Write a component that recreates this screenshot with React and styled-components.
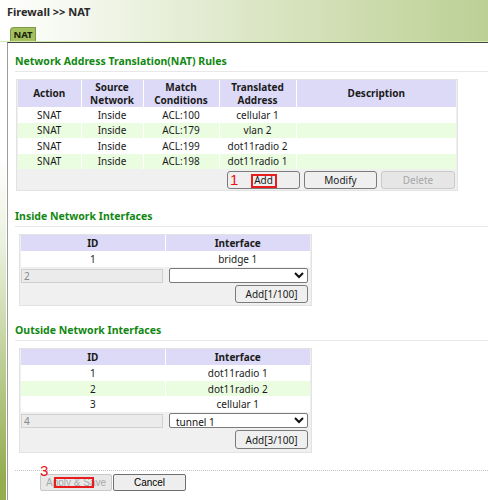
import React from 'react'
import styled, { createGlobalStyle } from 'styled-components'

const rules = [
  { action: 'SNAT', source: 'Inside', match: 'ACL:100', translated: 'cellular 1' },
  { action: 'SNAT', source: 'Inside', match: 'ACL:179', translated: 'vlan 2' },
  { action: 'SNAT', source: 'Inside', match: 'ACL:199', translated: 'dot11radio 2' },
  { action: 'SNAT', source: 'Inside', match: 'ACL:198', translated: 'dot11radio 1' },
]

const insideIfaces = [{ id: 1, name: 'bridge 1' }]
const outsideIfaces = [
  { id: 1, name: 'dot11radio 1' },
  { id: 2, name: 'dot11radio 2' },
  { id: 3, name: 'cellular 1' },
]

function App() {
  return (
    <>
      <GlobalStyle />
      <StPage>
        <StHeader>
          <StCrumb>Firewall &gt;&gt; NAT</StCrumb>
          <StTab>NAT</StTab>
        </StHeader>
        <StBody>
          <StStrip />
          <StFrame>
            <StSectionTitle>Network Address Translation(NAT) Rules</StSectionTitle>
            <StBox $width="442px" $ml="1px">
              <StTable>
                <colgroup>
                  <col style={{ width: 63 }} />
                  <col style={{ width: 62 }} />
                  <col style={{ width: 76 }} />
                  <col style={{ width: 77 }} />
                  <col />
                </colgroup>
                <thead>
                  <tr>
                    <StTh $h="27px">Action</StTh>
                    <StTh>Source<br />Network</StTh>
                    <StTh>Match<br />Conditions</StTh>
                    <StTh>Translated<br />Address</StTh>
                    <StTh>Description</StTh>
                  </tr>
                </thead>
                <tbody>
                  {rules.map((r, i) => (
                    <StTr key={i} $alt={i % 2 === 1}>
                      <StTd>{r.action}</StTd>
                      <StTd>{r.source}</StTd>
                      <StTd>{r.match}</StTd>
                      <StTd>{r.translated}</StTd>
                      <StTd></StTd>
                    </StTr>
                  ))}
                </tbody>
              </StTable>
              <StButtonRow $pt="2px" $pr="1px" $gap="4px">
                <StMarked>
                  <StButton $w="73px">Add</StButton>
                  <StStepNo $left="3px" $top="1px">1</StStepNo>
                  <StHighlight $left="24px" $top="3px" $w="26px" $h="14px" />
                </StMarked>
                <StButton $w="73px">Modify</StButton>
                <StButton $w="74px" disabled>Delete</StButton>
              </StButtonRow>
            </StBox>

            <StSectionTitle $mt="17px">Inside Network Interfaces</StSectionTitle>
            <StBox $width="293px" $ml="4px">
              <StTable>
                <colgroup>
                  <col style={{ width: 144 }} />
                  <col />
                </colgroup>
                <thead>
                  <tr>
                    <StTh $h="16px">ID</StTh>
                    <StTh>Interface</StTh>
                  </tr>
                </thead>
                <tbody>
                  {insideIfaces.map((r, i) => (
                    <StTr key={r.id} $alt={i % 2 === 1} $h="16px">
                      <StTd>{r.id}</StTd>
                      <StTd>{r.name}</StTd>
                    </StTr>
                  ))}
                  <StInputRow>
                    <StTd><StTextInput value="2" disabled readOnly /></StTd>
                    <StTd>
                      <StSelect defaultValue="">
                        <option value=""></option>
                        <option value="bridge 1">bridge 1</option>
                      </StSelect>
                    </StTd>
                  </StInputRow>
                </tbody>
              </StTable>
              <StButtonRow $pt="1px" $pr="2px" $pb="2px">
                <StButton $w="73px">Add[1/100]</StButton>
              </StButtonRow>
            </StBox>

            <StSectionTitle $mt="16px">Outside Network Interfaces</StSectionTitle>
            <StBox $width="293px" $ml="4px">
              <StTable>
                <colgroup>
                  <col style={{ width: 144 }} />
                  <col />
                </colgroup>
                <thead>
                  <tr>
                    <StTh $h="16px">ID</StTh>
                    <StTh>Interface</StTh>
                  </tr>
                </thead>
                <tbody>
                  {outsideIfaces.map((r, i) => (
                    <StTr key={r.id} $alt={i % 2 === 1} $h="15.7px">
                      <StTd>{r.id}</StTd>
                      <StTd>{r.name}</StTd>
                    </StTr>
                  ))}
                  <StInputRow>
                    <StTd><StTextInput value="4" disabled readOnly /></StTd>
                    <StTd>
                      <StSelect defaultValue="tunnel 1">
                        <option value="tunnel 1">tunnel 1</option>
                      </StSelect>
                    </StTd>
                  </StInputRow>
                </tbody>
              </StTable>
              <StButtonRow $pt="1px" $pr="2px" $pb="3px">
                <StButton $w="73px" $h="19px">Add[3/100]</StButton>
              </StButtonRow>
            </StBox>

            <StFooter>
              <StMarked>
                <StFormButton $w="72px" disabled>Apply &amp; Save</StFormButton>
                <StStepNo $left="0px" $top="-11px">3</StStepNo>
                <StHighlight $left="14px" $top="3px" $w="40px" $h="11px" />
              </StMarked>
              <StFormButton $w="73px">Cancel</StFormButton>
            </StFooter>
          </StFrame>
        </StBody>
      </StPage>
    </>
  )
}

export default App

const GlobalStyle = createGlobalStyle`
  html, body {
    margin: 0;
    padding: 0;
    background: #fff;
  }
  body {
    font-family: "Noto Sans", "Open Sans", sans-serif;
    color: #1a1a1a;
  }
`

const StPage = styled.div`
  width: 488px;
  height: 500px;
  overflow: hidden;
  display: flex;
  flex-direction: column;
`

const StHeader = styled.div`
  height: 41px;
  border-bottom: 1px solid #d4ecaa;
  background: linear-gradient(to right, #ffffff 0%, #dde7c8 50%, #bcd094 100%);
  display: flex;
  flex-direction: column;
  justify-content: space-between;
`

const StCrumb = styled.div`
  padding: 5px 0 0 7px;
  font-size: 11px;
  line-height: 14px;
  font-weight: 700;
  color: #2a2a2a;
`

const StTab = styled.div`
  margin-left: 10px;
  width: 26px;
  height: 14px;
  box-sizing: border-box;
  border: 1px solid #7c9a48;
  border-bottom: none;
  border-radius: 4px 1px 0 0;
  background: #a3bf5e;
  font-size: 9.5px;
  line-height: 13px;
  font-weight: 700;
  text-align: center;
  color: #16210a;
`

const StBody = styled.div`
  flex: 1;
  display: flex;
`

const StStrip = styled.div`
  width: 6px;
  margin-right: 1px;
  background: linear-gradient(to bottom, #ffffff 25%, #e9f0dc 45%, #93ad4f 95%);
`

const StFrame = styled.div`
  flex: 1;
  border-left: 1px solid #9c9c9c;
  border-top: 1px solid #444;
  padding: 0 0 0 7px;
`

const StSectionTitle = styled.div`
  margin-top: ${(p) => p.$mt || '10px'};
  padding-bottom: 2px;
  border-bottom: 1px solid #e8e8e8;
  font-size: 10.5px;
  line-height: 16px;
  font-weight: 700;
  color: #128812;
`

const StBox = styled.div`
  width: ${(p) => p.$width};
  margin: 7px 0 0 ${(p) => p.$ml};
  box-sizing: border-box;
  border: 1px solid #e2e2e2;
  background: #f0f0f0;
  padding: 0 1px 0 1px;
`

const StTable = styled.table`
  width: 100%;
  table-layout: fixed;
  border-collapse: collapse;
  font-size: 10px;
`

const StTh = styled.th`
  height: ${(p) => p.$h || 'auto'};
  padding: 0;
  background: #dcdaf6;
  border-right: 1px solid #fff;
  font-weight: 700;
  line-height: 13px;
  text-align: center;
  &:last-child {
    border-right: none;
  }
`

const StTr = styled.tr`
  height: ${(p) => p.$h || '15.5px'};
  background: ${(p) => (p.$alt ? '#eafde1' : '#fff')};
`

const StTd = styled.td`
  padding: 0;
  line-height: 12px;
  text-align: center;
  border-right: 1px solid #fff;
  &:last-child {
    border-right: none;
  }
`

const StInputRow = styled.tr`
  height: 17px;
  background: #f0f0f0;
  td {
    border-right: none;
    vertical-align: middle;
  }
`

const StTextInput = styled.input`
  display: block;
  width: 142px;
  height: 14px;
  margin: 0;
  box-sizing: border-box;
  border: 1px solid #d0d0d0;
  background: #ebebeb;
  padding: 0 2px;
  font-family: "Noto Sans", sans-serif;
  font-size: 10px;
  color: #888;
`

const StSelect = styled.select`
  display: block;
  width: 139px;
  height: 15px;
  margin: 0 0 0 4px;
  box-sizing: border-box;
  border: 1px solid #7a7a7a;
  border-radius: 2px;
  background: #fff;
  padding: 0 2px;
  font-family: "Noto Sans", sans-serif;
  font-size: 10px;
  color: #111;
`

const StButtonRow = styled.div`
  display: flex;
  justify-content: flex-end;
  gap: ${(p) => p.$gap || '0'};
  padding: ${(p) => p.$pt || '0'} ${(p) => p.$pr || '0'} ${(p) => p.$pb || '1px'} 0;
`

const StButton = styled.button`
  width: ${(p) => p.$w};
  height: ${(p) => p.$h || '18px'};
  margin: 0;
  padding: 0;
  box-sizing: border-box;
  border: 1px solid ${(p) => (p.disabled ? '#cacaca' : '#7b7b7b')};
  border-radius: 3px;
  background: ${(p) => (p.disabled ? '#e6e6e6' : '#efefef')};
  font-family: "Noto Sans", sans-serif;
  font-size: 10px;
  color: ${(p) => (p.disabled ? '#a6a6a6' : '#1a1a1a')};
`

const StMarked = styled.div`
  position: relative;
  display: flex;
`

const StStepNo = styled.span`
  position: absolute;
  left: ${(p) => p.$left};
  top: ${(p) => p.$top};
  font-family: "Liberation Sans", Arial, sans-serif;
  font-size: 15px;
  line-height: 15px;
  color: #ee1111;
  pointer-events: none;
`

const StHighlight = styled.span`
  position: absolute;
  left: ${(p) => p.$left};
  top: ${(p) => p.$top};
  width: ${(p) => p.$w};
  height: ${(p) => p.$h};
  box-sizing: border-box;
  border: 2px solid #e81c1c;
  pointer-events: none;
`

const StFooter = styled.div`
  margin-top: 17px;
  border-top: 1px dotted #c4c4c4;
  padding: 3px 0 0 25px;
  display: flex;
  gap: 1px;
`

const StFormButton = styled.button`
  width: ${(p) => p.$w};
  height: 17px;
  margin: 0;
  padding: 0;
  box-sizing: border-box;
  border: 1px solid ${(p) => (p.disabled ? '#c8c8c8' : '#6f6f6f')};
  border-radius: 2px;
  background: ${(p) => (p.disabled ? '#e8e8e8' : '#eeeeee')};
  font-family: "Liberation Sans", Arial, sans-serif;
  font-size: 10px;
  color: ${(p) => (p.disabled ? '#a9a9a9' : '#000')};
`
